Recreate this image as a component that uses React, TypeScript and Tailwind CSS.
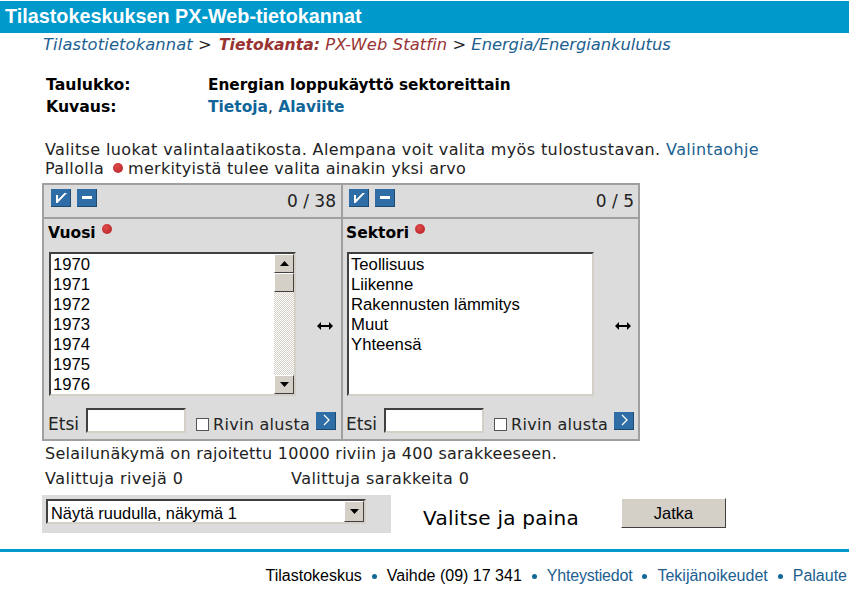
const dejavu = "font-['DejaVu_Sans',sans-serif]";

const Dot = () => (
  <span className="inline-block w-[10px] h-[10px] rounded-full bg-[radial-gradient(circle_at_40%_35%,#e04a4a,#b01f24)]" />
);

const BlueBtn = ({ kind }: { kind: "check" | "minus" | "next" }) => (
  <span className="flex items-center justify-center w-5 h-[18px] bg-[#2f6da6] border-b border-r border-[#1d4a70]">
    {kind === "check" && (
      <svg width="14" height="12" viewBox="0 0 14 12">
        <path d="M2 3h2v4.5L10.5 1H13L3.5 11H2z" fill="#fff" />
      </svg>
    )}
    {kind === "minus" && <span className="w-[10px] h-[3px] bg-white" />}
    {kind === "next" && (
      <svg width="10" height="12" viewBox="0 0 10 12">
        <path d="M3 1l5 5-5 5" fill="none" stroke="#fff" strokeWidth="1.3" />
      </svg>
    )}
  </span>
);

const Arrow = ({ down, tall }: { down?: boolean; tall?: boolean }) => (
  <span
    className={`flex items-center justify-center w-5 ${tall ? "h-[21px]" : "h-[19px]"} bg-[#d4d0c8] border border-t-white border-l-white border-r-[#404040] border-b-[#404040]`}
  >
    <svg width="9" height="5" viewBox="0 0 9 5">
      <path d={down ? "M0 0h9L4.5 5z" : "M0 5h9L4.5 0z"} fill="#000" />
    </svg>
  </span>
);

const Panel = ({
  title,
  count,
  items,
  scroll,
  className,
}: {
  title: string;
  count: string;
  items: string[];
  scroll?: boolean;
  className?: string;
}) => (
  <div className={`w-[297px] shrink-0 flex flex-col ${className ?? ""}`}>
    <div className="h-[34px] border-b-[2px] border-[#a0a0a0] flex items-start justify-between pt-[4px] pl-[7px] pr-[5px]">
      <div className="flex gap-[6px]">
        <BlueBtn kind="check" />
        <BlueBtn kind="minus" />
      </div>
      <span className="text-[17px] leading-[24px] text-[#222]">{count}</span>
    </div>
    <div className="h-[33px] pl-[4px] flex items-start pt-[2px] gap-[6px]">
      <b className="text-[15.5px] leading-[24px] text-black">{title}</b>
      <span className="flex mt-[3px]">
        <Dot />
      </span>
    </div>
    <div className="flex items-center pl-[5px]">
      <div className="relative w-[247px] h-[144px] bg-white border-2 border-t-[#404040] border-l-[#404040] border-r-[#d4d0c8] border-b-[#d4d0c8] overflow-hidden font-['Liberation_Sans',sans-serif] text-[16.7px] leading-[20px] text-black pl-[2px] pt-px">
        {items.map((i) => (
          <div key={i} className="whitespace-nowrap">
            {i}
          </div>
        ))}
        {scroll && (
          <div className="absolute right-0 top-0 bottom-0 w-5 flex flex-col justify-between bg-[repeating-conic-gradient(#d4d0c8_0_25%,#fff_0_50%)] bg-[length:2px_2px]">
            <div className="flex flex-col">
              <Arrow />
              <span className="w-5 h-[19px] bg-[#d4d0c8] border border-t-white border-l-white border-r-[#404040] border-b-[#404040]" />
            </div>
            <Arrow down />
          </div>
        )}
      </div>
      <svg className="ml-[21px] mt-[3px]" width="16" height="8" viewBox="0 0 16 8">
        <path d="M0 4l4-4v3h8V0l4 4-4 4V5H4v3z" fill="#000" />
      </svg>
    </div>
    <div className="flex items-center pl-[4px] pr-[5px] mt-[12px] h-[25px] text-[#222]">
      <span className="text-[17px] mt-[8px]">Etsi</span>
      <span className="ml-[7px] w-[100px] h-[25px] bg-white border-2 border-t-[#404040] border-l-[#404040] border-r-[#d4d0c8] border-b-[#d4d0c8]" />
      <span className="ml-[10px] mt-[8px] w-[13px] h-[13px] bg-white border border-[#555]" />
      <span className="ml-[4px] mt-[8px] flex-1 text-[16px] tracking-[0.3px]">Rivin alusta</span>
      <BlueBtn kind="next" />
    </div>
  </div>
);

const Sep = () => <span className="w-[5px] h-[5px] rounded-full bg-[#116699]" />;

export default function App() {
  return (
    <div className={`w-[849px] h-[590px] bg-white overflow-hidden ${dejavu} pt-px`}>
      <header className="h-[32px] bg-[#0099cc] pl-[5px] flex items-center font-['Liberation_Sans',sans-serif] font-bold text-[19.8px] text-white">
        Tilastokeskuksen PX-Web-tietokannat
      </header>
      <nav className="pl-[43px] mt-[2px] text-[16.33px] leading-[20px] italic text-[#222] whitespace-nowrap">
        <span className="text-[#206090] tracking-[0.11px]">Tilastotietokannat</span> &gt;{" "}
        <span className="text-[#993333] tracking-[0.1px]">
          <b className="ml-[2px] text-[15.6px] tracking-normal">Tietokanta:</b> PX-Web Statfin
        </span>{" "}
        &gt; <span className="text-[#206090] tracking-[-0.05px]">Energia/Energiankulutus</span>
      </nav>
      <dl className="pl-[46px] mt-[19px] text-[15.3px] leading-[22px] font-bold text-black">
        <div className="flex">
          <dt className="w-[162px] text-[15.7px]">Taulukko:</dt>
          <dd>Energian loppukäyttö sektoreittain</dd>
        </div>
        <div className="flex">
          <dt className="w-[162px] text-[15.7px]">Kuvaus:</dt>
          <dd className="text-[#116699] text-[15.45px]">
            Tietoja<span className="font-normal text-[#222]">,</span> Alaviite
          </dd>
        </div>
      </dl>
      <p className="pl-[45px] mt-[22px] text-[16px] tracking-[0.38px] leading-[19px] text-[#222] whitespace-nowrap">
        Valitse luokat valintalaatikosta. Alempana voit valita myös tulostustavan.{" "}
        <span className="text-[#206090]">Valintaohje</span>
        <br />
        Pallolla <span className="relative top-[-1px] ml-[3px]"><Dot /></span>{" "}
        <span className="tracking-[0.29px]">merkityistä tulee valita ainakin yksi arvo</span>
      </p>
      <div className="ml-[42px] mt-[5px] w-[598px] h-[258px] bg-[#dcdcdc] border-[2px] border-[#a0a0a0] flex">
        <Panel
          title="Vuosi"
          count="0 / 38"
          scroll
          items={["1970", "1971", "1972", "1973", "1974", "1975", "1976"]}
        />
        <div className="w-[2px] shrink-0 bg-[#a0a0a0]" />
        <Panel
          className="-ml-px"
          title="Sektori"
          count="0 / 5"
          items={["Teollisuus", "Liikenne", "Rakennusten lämmitys", "Muut", "Yhteensä"]}
        />
      </div>
      <p className="pl-[45px] mt-[2px] text-[16px] tracking-[0.25px] leading-[22px] text-[#222] whitespace-nowrap">
        Selailunäkymä on rajoitettu 10000 riviin ja 400 sarakkeeseen.
      </p>
      <div className="pl-[45px] mt-[3px] flex text-[16px] tracking-[0.45px] leading-[22px] text-[#222]">
        <span className="w-[246px]">Valittuja rivejä 0</span>
        <span>Valittuja sarakkeita 0</span>
      </div>
      <div className="mt-[5px] flex items-center">
        <div className="ml-[42px] w-[349px] h-[38px] bg-[#dcdcdc] flex items-start pt-[4px] pl-[4px]">
          <div className="w-[320px] h-[25px] bg-white border-2 border-t-[#404040] border-l-[#404040] border-r-[#d4d0c8] border-b-[#d4d0c8] flex items-center justify-between pl-[3px] font-['Liberation_Sans',sans-serif] text-[16.4px] text-black">
            <span className="mt-[4px]">Näytä ruudulla, näkymä 1</span>
            <Arrow down tall />
          </div>
        </div>
        <span className="ml-[32px] mt-[8px] text-[20px] tracking-[0.25px] text-black">Valitse ja paina</span>
        <span className="ml-[42px] mt-[-2px] w-[105px] h-[30px] bg-[#d4d0c8] border border-t-white border-l-white border-r-[#404040] border-b-[#404040] flex items-center justify-center font-['Liberation_Sans',sans-serif] text-[16.5px] text-black">
          Jatka
        </span>
      </div>
      <div className="mt-[16px] h-[3px] bg-[#0099cc]" />
      <footer className="mt-[14px] pr-[2px] flex justify-end items-center gap-[10px] font-['Liberation_Sans',sans-serif] text-[16px] leading-[20px] text-black">
        <span>Tilastokeskus</span>
        <Sep />
        <span>Vaihde (09) 17 341</span>
        <Sep />
        <span className="text-[#206090] tracking-[-0.2px]">Yhteystiedot</span>
        <Sep />
        <span className="text-[#206090]">Tekijänoikeudet</span>
        <Sep />
        <span className="text-[#206090]">Palaute</span>
      </footer>
    </div>
  );
}
